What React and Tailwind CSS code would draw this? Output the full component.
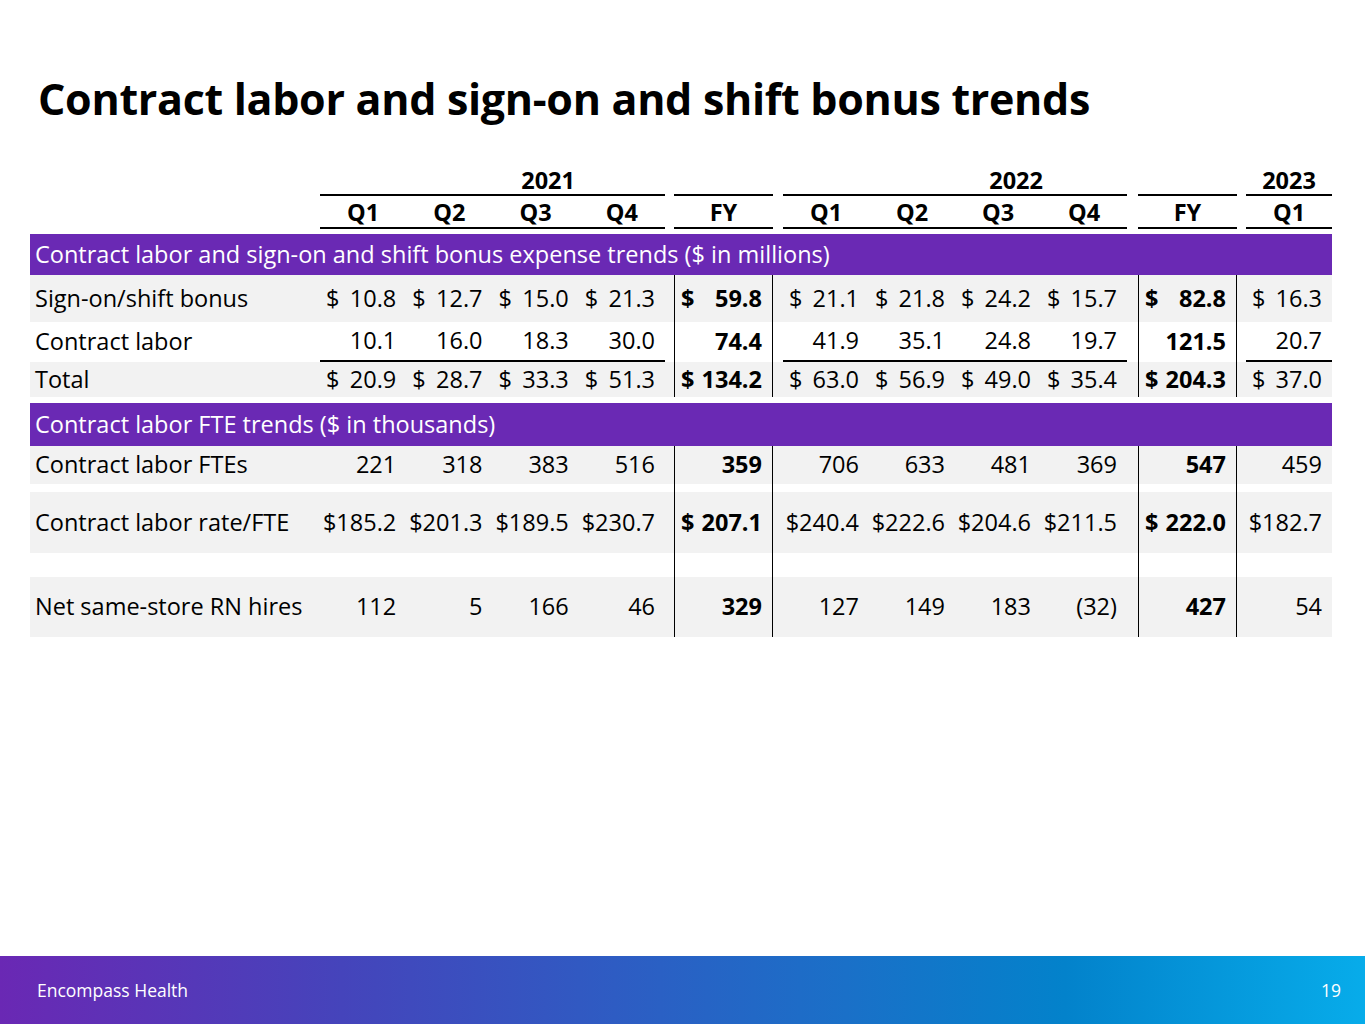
const cols = "grid grid-cols-[290px_repeat(4,86.25px)_9px_99px_10px_repeat(4,86px)_11px_99px_9px_86px]"

const line = "border-black"

// value cell: "$ 10.8" splits the dollar sign to the left edge
const Val = ({ v, bold, className = "" }) => {
    if (v && v.startsWith("$ ")) {
        return (
            <div className={`flex items-center justify-between pl-[6px] pr-[10px] ${bold ? "font-bold" : ""} ${className}`}>
                <span>$</span>
                <span>{v.slice(2)}</span>
            </div>
        )
    }
    return (
        <div className={`flex items-center justify-end pr-[10px] ${bold ? "font-bold" : ""} ${className}`}>
            {v}
        </div>
    )
}

const Row = ({ label, vals, className, underline }) => {
    const u = underline ? `border-b-2 ${line}` : ""
    const fy = `border-x-[1.5px] ${line}`
    return (
        <div className={`${cols} ${className}`}>
            <div className="flex items-center pl-[5px] whitespace-nowrap">{label}</div>
            {vals.slice(0, 4).map((v, i) => <Val key={i} v={v} className={u} />)}
            <div />
            <Val v={vals[4]} bold className={fy} />
            <div />
            {vals.slice(5, 9).map((v, i) => <Val key={i} v={v} className={u} />)}
            <div />
            <Val v={vals[9]} bold className={fy} />
            <div />
            <Val v={vals[10]} className={u} />
        </div>
    )
}

const Spacer = ({ className }) => (
    <div className={`${cols} ${className}`}>
        <div className="col-span-6" />
        <div className={`border-x-[1.5px] ${line}`} />
        <div className="col-span-6" />
        <div className={`border-x-[1.5px] ${line}`} />
        <div className="col-span-2" />
    </div>
)

const Band = ({ children, className }) => (
    <div className={`flex items-center bg-[#6a29b4] pl-[5px] text-white whitespace-nowrap ${className}`}>{children}</div>
)

export default function App() {
    const hb = `border-b-2 ${line}`
    return (
        <div className="w-[1365px] h-[1024px] flex flex-col bg-white text-black font-['Open_Sans',sans-serif] text-[23.5px]">
            {/* Title */}
            <div className="h-[165px] pl-[38px] pt-[77px]">
                <h1 className="text-[43px] leading-none font-bold tracking-[-0.3px]">Contract labor and sign-on and shift bonus trends</h1>
            </div>

            <div className="ml-[30px] w-[1302px]">
                {/* Header */}
                <div className={`${cols} h-[31px] font-bold leading-[24px]`}>
                    <div />
                    <div className={`col-span-4 flex items-center justify-end pr-[90px] ${hb}`}>2021</div>
                    <div />
                    <div className={hb} />
                    <div />
                    <div className={`col-span-4 flex items-center justify-end pr-[84px] ${hb}`}>2022</div>
                    <div />
                    <div className={hb} />
                    <div />
                    <div className={`flex items-center justify-center ${hb}`}>2023</div>
                </div>
                <div className={`${cols} h-[33px] font-bold leading-[24px]`}>
                    <div />
                    {["Q1", "Q2", "Q3", "Q4"].map(q => <div key={q} className={`flex items-center justify-center ${hb}`}>{q}</div>)}
                    <div />
                    <div className={`flex items-center justify-center ${hb}`}>FY</div>
                    <div />
                    {["Q1", "Q2", "Q3", "Q4"].map(q => <div key={q} className={`flex items-center justify-center ${hb}`}>{q}</div>)}
                    <div />
                    <div className={`flex items-center justify-center ${hb}`}>FY</div>
                    <div />
                    <div className={`flex items-center justify-center ${hb}`}>Q1</div>
                </div>

                <div className="h-[5px]" />

                <Band className="h-[41px]">Contract labor and sign-on and shift bonus expense trends ($ in millions)</Band>
                <Row className="h-[47px] bg-[#f2f2f2]" label="Sign-on/shift bonus"
                    vals={["$ 10.8", "$ 12.7", "$ 15.0", "$ 21.3", "$ 59.8", "$ 21.1", "$ 21.8", "$ 24.2", "$ 15.7", "$ 82.8", "$ 16.3"]} />
                <Row className="h-[40px]" label="Contract labor" underline
                    vals={["10.1", "16.0", "18.3", "30.0", "74.4", "41.9", "35.1", "24.8", "19.7", "121.5", "20.7"]} />
                <Row className="h-[35px] bg-[#f2f2f2]" label="Total"
                    vals={["$ 20.9", "$ 28.7", "$ 33.3", "$ 51.3", "$ 134.2", "$ 63.0", "$ 56.9", "$ 49.0", "$ 35.4", "$ 204.3", "$ 37.0"]} />

                <div className="h-[6px]" />

                <Band className="h-[43px]">Contract labor FTE trends ($ in thousands)</Band>
                <Row className="h-[38px] bg-[#f2f2f2]" label="Contract labor FTEs"
                    vals={["221", "318", "383", "516", "359", "706", "633", "481", "369", "547", "459"]} />
                <Spacer className="h-[8px]" />
                <Row className="h-[61px] bg-[#f2f2f2]" label="Contract labor rate/FTE"
                    vals={["$185.2", "$201.3", "$189.5", "$230.7", "$ 207.1", "$240.4", "$222.6", "$204.6", "$211.5", "$ 222.0", "$182.7"]} />
                <Spacer className="h-[24px]" />
                <Row className="h-[60px] bg-[#f2f2f2]" label="Net same-store RN hires"
                    vals={["112", "5", "166", "46", "329", "127", "149", "183", "(32)", "427", "54"]} />
            </div>

            {/* Footer */}
            <div className="mt-auto h-[68px] flex items-center justify-between pl-[37px] pr-[24px] text-white text-[17.5px] bg-[linear-gradient(90deg,#6a28b4_0%,#4544bb_25%,#2e5cc3_45%,#1a70c8_62%,#0382cb_78%,#07acea_100%)]">
                <span>Encompass Health</span>
                <span>19</span>
            </div>
        </div>
    )
}
